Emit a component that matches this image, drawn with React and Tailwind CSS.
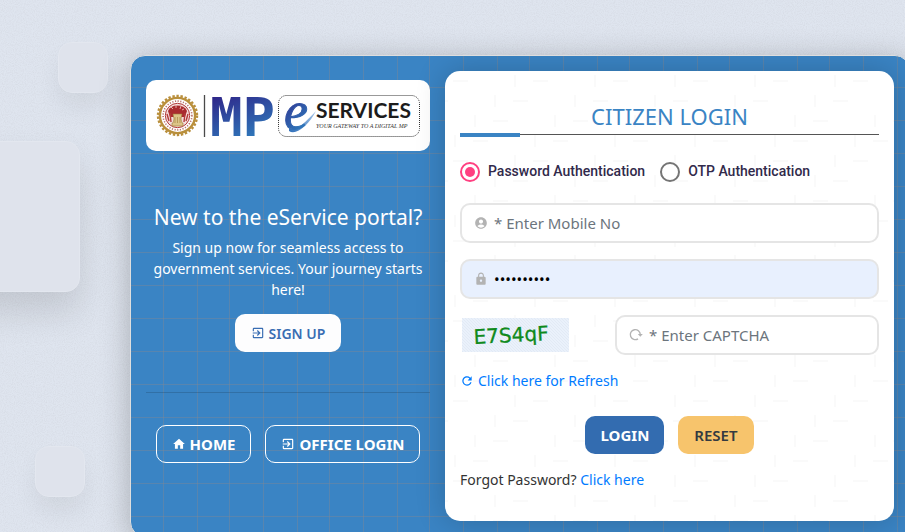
import { useState } from "react";
import { MdAccountCircle, MdExitToApp, MdHome, MdLock, MdRefresh } from "react-icons/md";

function PageTexture() {
  return (
    <svg className="absolute inset-0 w-full h-full" aria-hidden="true">
      <filter id="grain" x="0" y="0" width="100%" height="100%">
        <feTurbulence type="fractalNoise" baseFrequency="0.9" numOctaves="2" seed="4" />
        <feColorMatrix values="0 0 0 0 0.6  0 0 0 0 0.62  0 0 0 0 0.68  1.6 0 0 0 -0.6" />
      </filter>
      <rect width="100%" height="100%" filter="url(#grain)" opacity="0.5" />
    </svg>
  );
}

function GridTexture() {
  return (
    <svg className="absolute inset-0 w-full h-full" aria-hidden="true">
      <defs>
        <pattern id="grid" x="-1" y="-1" width="100" height="33" patternUnits="userSpaceOnUse">
          <path d="M0 32.5h100M33.5 0v33M67.5 0v33M99.5 0v33" stroke="#7d8794" strokeOpacity="0.45" />
        </pattern>
      </defs>
      <rect width="100%" height="100%" fill="url(#grid)" />
    </svg>
  );
}

function WeaveTexture() {
  return (
    <svg className="absolute inset-0 w-full h-full" aria-hidden="true">
      <defs>
        <pattern id="weave" x="8" y="0" width="80" height="80" patternUnits="userSpaceOnUse">
          <path
            d="M0 10h15M60 30h15M40 50h15M20 70h15M62 4v12M42 24v12M22 44v12M2 64v12"
            stroke="#fafafa"
            strokeWidth="2"
            fill="none"
          />
        </pattern>
      </defs>
      <rect width="100%" height="100%" fill="url(#weave)" />
    </svg>
  );
}

function Logo() {
  return (
    <svg viewBox="0 0 284 71" className="block w-full" role="img" aria-label="MP eServices">
      <defs>
        <linearGradient id="mp" x1="0" y1="0" x2="0.4" y2="1">
          <stop offset="0.1" stopColor="#2f1f85" />
          <stop offset="0.9" stopColor="#2f74b8" />
        </linearGradient>
        <linearGradient id="swoosh" x1="0" y1="1" x2="1" y2="0">
          <stop offset="0" stopColor="#2f6fba" />
          <stop offset="1" stopColor="#a9c7e8" />
        </linearGradient>
      </defs>
      {/* State emblem */}
      <circle cx="31.5" cy="35.5" r="19.5" fill="none" stroke="#b98f3c" strokeWidth="2.4" strokeDasharray="2.4 1.7" />
      <circle cx="31.5" cy="35.5" r="17.6" fill="#fff" stroke="#b98f3c" strokeWidth="2.4" />
      <circle cx="31.5" cy="35.5" r="14.4" fill="none" stroke="#b9736c" strokeWidth="1.6" strokeDasharray="1.2 1.5" />
      <circle cx="31.5" cy="35.5" r="12.2" fill="#f3dcda" stroke="#b33a3a" strokeWidth="1" />
      <path d="M22 31a10 8 0 0 1 19 0l-2 6h-15z" fill="#a92b2f" />
      <path d="M21 34l2 7M24 33l1 9M39 33l-1 9M42 34l-2 7" stroke="#b33a3a" strokeWidth="1.4" />
      <path d="M25 27l2 2M30 25v3M35 26l-1 3M38 29l-2 1" stroke="#e8a9a5" strokeWidth="1" />
      <path d="M27 34h9l-1 5 1 4h1v3H26v-3h1l1-4z" fill="#dcc488" stroke="#a07d3b" strokeWidth="0.6" />
      <path d="M29 37v6M31.5 37v6M34 37v6" stroke="#a07d3b" strokeWidth="0.6" />
      <path d="M58.5 15v42" stroke="#4a4a4a" strokeWidth="1.3" />
      <text x="64" y="56" fontSize="54" fontWeight="700" fill="url(#mp)" className="font-['DejaVu_Sans_Mono',monospace]">
        MP
      </text>
      <rect x="132.5" y="15.5" width="141" height="41" rx="8" fill="none" stroke="#333" strokeDasharray="1 1" />
      <path d="M143 48c6 4 14-3 27-17-7 14-20 25-27 20z" fill="url(#swoosh)" />
      <text x="138" y="49" fontSize="54" fontStyle="italic" fill="url(#mp)" stroke="url(#mp)" strokeWidth="1" className="font-['Liberation_Serif',serif]">
        e
      </text>
      <text x="170" y="38" fontSize="21" fontWeight="700" fill="#1c1c1c" className="font-['Lato',sans-serif]">
        SERVICES
      </text>
      <text x="170" y="48" fontSize="6" fontStyle="italic" fill="#333" className="font-['Liberation_Serif',serif]">
        YOUR GATEWAY TO A DIGITAL MP
      </text>
    </svg>
  );
}

function Captcha() {
  return (
    <svg viewBox="0 0 107 34" className="block w-[107px] h-[34px] shrink-0" role="img" aria-label="Captcha">
      <defs>
        <pattern id="hatch" width="3" height="3" patternUnits="userSpaceOnUse">
          <rect width="3" height="3" fill="#eaf1fb" />
          <path d="M0 0l3 3" stroke="#dfe9f4" strokeWidth="0.8" />
        </pattern>
      </defs>
      <rect width="107" height="34" fill="url(#hatch)" />
      <text x="12" y="26" fontSize="20" fill="#0f8a1c" stroke="#0f8a1c" strokeWidth="0.3" transform="rotate(-3 12 26)" className="font-['DejaVu_Sans',sans-serif]">
        E7S4qF
      </text>
    </svg>
  );
}

function CaptchaIcon() {
  return (
    <svg viewBox="0 0 14 14" className="w-[14px] h-[14px] shrink-0" fill="none" aria-hidden="true">
      <path d="M9 10.8A5 5 0 1 1 11.3 6.5" stroke="#b3b3b3" strokeWidth="1.4" />
      <path d="M8.8 6h5l-2.5 2.8z" fill="#b3b3b3" />
    </svg>
  );
}

function Field({ label, icon, filled, ...props }) {
  return (
    <div
      className={`flex flex-1 min-w-0 items-center gap-1.5 h-10 px-3 border-2 border-[#e5e5e5] rounded-[10px] ${
        filled ? "bg-[#e8f0fe]" : "bg-white"
      }`}
    >
      <span className="text-[#b3b3b3]">{icon}</span>
      <input
        aria-label={label}
        className="w-full min-w-0 bg-transparent text-[15px] leading-6 text-black placeholder:text-[#6c757d] outline-none"
        {...props}
      />
    </div>
  );
}

function AuthOption({ value, label, selected, onSelect }) {
  const active = selected === value;
  return (
    <label className="flex items-center gap-2 font-['Roboto',sans-serif] text-[14px] font-medium text-[#312a4b]">
      <input
        type="radio"
        name="auth"
        value={value}
        checked={active}
        onChange={() => onSelect(value)}
        className="appearance-none w-5 h-5 rounded-full border-2 border-[#757575] bg-white bg-clip-content p-[3px] checked:border-[#ff4081] checked:bg-[#ff4081]"
      />
      {label}
    </label>
  );
}

export default function App() {
  const [auth, setAuth] = useState("password");
  const [mobile, setMobile] = useState("");
  const [password, setPassword] = useState("citizen123");
  const [captcha, setCaptcha] = useState("");

  const reset = () => {
    setMobile("");
    setPassword("");
    setCaptcha("");
  };

  return (
    <div className="relative min-h-screen overflow-hidden bg-[#dfe5ef] pt-[55px] pl-[130px] font-['Noto_Sans',sans-serif]">
      <PageTexture />
      {/* Floating squares */}
      <div className="absolute left-[58px] top-[42px] w-[50px] h-[51px] rounded-[14px] bg-[#dfe3ec] border border-[#e3e7ef] shadow-[0_15px_25px_rgba(0,0,0,0.06)]" />
      <div className="absolute -left-10 top-[141px] w-[120px] h-[151px] rounded-[14px] bg-[#dfe3ec] border border-[#e3e7ef] shadow-[0_20px_35px_rgba(0,0,0,0.12)]" />
      <div className="absolute left-[35px] top-[446px] w-[50px] h-[51px] rounded-[14px] bg-[#dfe3ec] border border-[#e3e7ef] shadow-[0_15px_25px_rgba(0,0,0,0.06)]" />

      <main className="relative flex -mr-[5px] p-[15px] gap-[15px] overflow-hidden rounded-[15px] border border-[#dedede] bg-[#3a84c4] shadow-[0_5px_30px_rgba(0,0,0,0.25)]">
        <GridTexture />

        <section className="relative flex-[284] min-w-0 flex flex-col items-center pt-[9px] text-center text-white">
          <div className="w-full rounded-[10px] bg-white overflow-hidden">
            <Logo />
          </div>
          <h1 className="mt-[51px] text-[21px] leading-[30px] whitespace-nowrap">New to the eService portal?</h1>
          <p className="mt-[5px] px-1 text-[14px] leading-[21px]">
            Sign up now for seamless access to government services. Your journey starts here!
          </p>
          <a href="#signup" className="flex items-center gap-1 h-[38px] mt-[14px] px-4 rounded-[10px] bg-[#fdfdfe] text-[14px] font-semibold text-[#3a6eb3]">
            <MdExitToApp size={14} />
            SIGN UP
          </a>
          <hr className="w-full mt-10 border-black/15" />
          <nav className="flex gap-[14px] mt-8">
            <a href="#home" className="flex items-center gap-1 h-[38px] px-[15px] rounded-[10px] border border-white text-[15px] font-bold">
              <MdHome size={14} />
              HOME
            </a>
            <a href="#office" className="flex items-center gap-1 h-[38px] px-[15px] rounded-[10px] border border-white text-[15px] font-bold whitespace-nowrap">
              <MdExitToApp size={14} />
              OFFICE LOGIN
            </a>
          </nav>
        </section>

        <section className="relative flex-[449] min-w-0 overflow-hidden rounded-[15px] bg-white shadow-[0_0_30px_rgba(0,0,0,0.2)]">
          <WeaveTexture />
          <form className="relative px-[15px] pt-[30px] pb-[31px]" onSubmit={(e) => e.preventDefault()}>
            <h2 className="border-b border-[#555] pb-[3px] text-center text-[22px] leading-[30px] text-[#3a84c4]">CITIZEN LOGIN</h2>
            <div className="w-[60px] h-1 -mt-0.5 bg-[#3a84c4]" />

            <div className="flex gap-[15px] mt-6">
              <AuthOption value="password" label="Password Authentication" selected={auth} onSelect={setAuth} />
              <AuthOption value="otp" label="OTP Authentication" selected={auth} onSelect={setAuth} />
            </div>

            <div className="flex mt-[21px]">
              <Field
                label="Mobile number"
                icon={<MdAccountCircle size={14} />}
                placeholder="* Enter Mobile No"
                value={mobile}
                onChange={(e) => setMobile(e.target.value)}
              />
            </div>
            <div className="flex mt-4">
              <Field
                label="Password"
                type="password"
                filled
                icon={<MdLock size={14} />}
                value={password}
                onChange={(e) => setPassword(e.target.value)}
              />
            </div>
            <div className="flex items-center gap-[46px] mt-4 pl-0.5">
              <Captcha />
              <Field
                label="Captcha"
                icon={<CaptchaIcon />}
                placeholder="* Enter CAPTCHA"
                value={captcha}
                onChange={(e) => setCaptcha(e.target.value)}
              />
            </div>

            <a href="#refresh" className="inline-flex items-center gap-1 mt-4 text-[14px] leading-5 text-[#007bff]">
              <MdRefresh size={14} />
              Click here for Refresh
            </a>

            <div className="flex justify-center gap-[14px] mt-[22px]">
              <button type="submit" className="h-[38px] px-[15px] rounded-[10px] bg-[#336cb0] text-[15px] font-bold text-white">LOGIN</button>
              <button type="button" onClick={reset} className="h-[38px] px-4 rounded-[10px] bg-[#f7c46c] text-[15px] font-semibold text-[#343a40]">RESET</button>
            </div>

            <p className="mt-4 text-[14px] leading-5 text-[#333]">
              Forgot Password? <a href="#forgot" className="text-[#007bff]">Click here</a>
            </p>
          </form>
        </section>
      </main>
    </div>
  );
}
